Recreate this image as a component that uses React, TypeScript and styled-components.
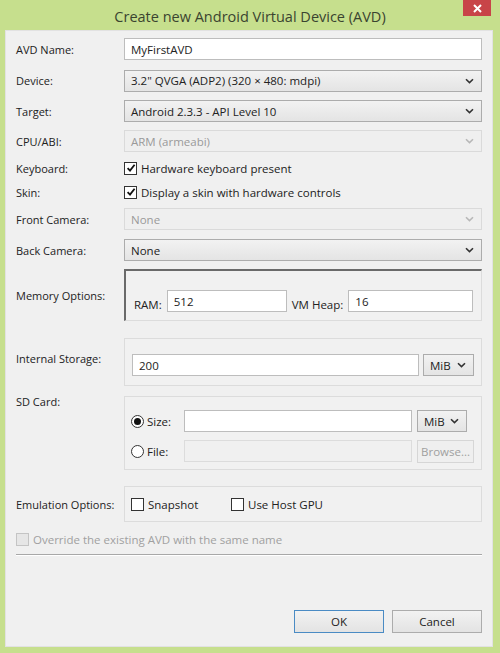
import React from 'react';
import styled, { createGlobalStyle } from 'styled-components';

const GlobalStyle = createGlobalStyle`
  html, body {
    margin: 0;
    padding: 0;
    background: #c6df8d;
  }
  body {
    font-family: "Open Sans", "Noto Sans", sans-serif;
    font-size: 11px;
    color: #222;
  }
`;

const Window = styled.div`
  width: 500px;
  height: 653px;
  background: #c6df8d;
  display: flex;
  flex-direction: column;
  box-sizing: border-box;
`;

const TitleBar = styled.div`
  height: 30px;
  display: grid;
  grid-template-columns: 1fr auto 1fr;
`;

const Title = styled.div`
  grid-column: 2;
  align-self: center;
  font-size: 14.5px;
  color: #3a4430;
  padding-top: 2px;
`;

const CloseButton = styled.div`
  grid-column: 3;
  justify-self: end;
  align-self: start;
  width: 28px;
  height: 16px;
  margin-right: 9px;
  background: #c84448;
  display: flex;
  align-items: center;
  justify-content: center;
`;

const Panel = styled.div`
  flex: 1;
  margin: 0 7px 6px 5px;
  background: #f0f0f0;
  border: 1px solid #e2e2e2;
  padding: 7px 10px 13px 10px;
  display: flex;
  flex-direction: column;
`;

const Row = styled.div<{ $h: number; $mt?: number; $top?: boolean }>`
  display: flex;
  align-items: ${(p) => (p.$top ? 'flex-start' : 'center')};
  height: ${(p) => p.$h}px;
  margin-top: ${(p) => p.$mt ?? 0}px;
`;

const Label = styled.div<{ $dy?: number }>`
  width: 108px;
  flex: none;
  position: relative;
  top: ${(p) => p.$dy ?? 0}px;
`;

const TextInput = styled.input<{ $w?: number }>`
  box-sizing: border-box;
  height: 22px;
  ${(p) => (p.$w ? `width: ${p.$w}px; flex: none;` : 'flex: 1; width: 0; min-width: 0;')}
  border: 1px solid #bdbdbd;
  background: #fff;
  font-family: inherit;
  font-size: 11.5px;
  color: #222;
  padding: 0 6px;
  outline: none;
  &:disabled {
    background: #f0f0f0;
    border-color: #dcdcdc;
  }
`;

const SelectBox = styled.div<{ $disabled?: boolean; $w?: number }>`
  box-sizing: border-box;
  height: 22px;
  ${(p) => (p.$w ? `width: ${p.$w}px; flex: none;` : 'flex: 1;')}
  display: flex;
  align-items: center;
  justify-content: space-between;
  padding: 0 7px 0 6px;
  border: 1px solid ${(p) => (p.$disabled ? '#dadada' : '#acacac')};
  background: ${(p) =>
    p.$disabled ? '#efefef' : 'linear-gradient(#f2f2f2, #e4e4e4)'};
  color: ${(p) => (p.$disabled ? '#9a9a9a' : '#222')};
  font-size: 11.5px;
`;

const Check = styled.span<{ $disabled?: boolean }>`
  box-sizing: border-box;
  width: 13px;
  height: 13px;
  flex: none;
  border: 1px solid ${(p) => (p.$disabled ? '#c4c4c4' : '#333')};
  background: ${(p) => (p.$disabled ? '#e6e6e6' : '#fff')};
  display: inline-flex;
  align-items: center;
  justify-content: center;
  margin-right: 4px;
`;

const Radio = styled.span`
  box-sizing: border-box;
  width: 13px;
  height: 13px;
  flex: none;
  border: 1px solid #333;
  border-radius: 50%;
  background: #fff;
  display: inline-flex;
  align-items: center;
  justify-content: center;
  margin-right: 3px;
`;

const Dot = styled.span`
  width: 7px;
  height: 7px;
  border-radius: 50%;
  background: #111;
`;

const Option = styled.label<{ $w?: number; $disabled?: boolean }>`
  display: inline-flex;
  align-items: center;
  ${(p) => (p.$w ? `width: ${p.$w}px;` : '')}
  flex: none;
  color: ${(p) => (p.$disabled ? '#a0a0a0' : '#222')};
  font-size: 11.5px;
`;

const Group = styled.div<{ $memory?: boolean }>`
  flex: 1;
  min-width: 0;
  height: 100%;
  box-sizing: border-box;
  border: 1px solid #dcdcdc;
  ${(p) => (p.$memory ? 'border-top: 2px solid #6a6a6a; border-left: 2px solid #6a6a6a;' : '')}
  background: #f1f1f1;
  display: flex;
`;

const MemoryInner = styled.div`
  flex: 1;
  min-width: 0;
  display: flex;
  align-items: flex-end;
  padding: 0 8px 8px 8px;
  gap: 5px;
`;

const InlineLabel = styled.span`
  flex: none;
  font-size: 11.5px;
`;

const StorageInner = styled.div`
  flex: 1;
  min-width: 0;
  display: flex;
  align-items: center;
  gap: 4px;
  padding: 6px 7px 0 7px;
`;

const SdGrid = styled.div`
  display: grid;
  grid-template-columns: 48px 228px auto;
  grid-auto-rows: 22px;
  row-gap: 8px;
  column-gap: 5px;
  padding: 13px 0 0 6px;
  align-items: center;
`;

const EmulationInner = styled.div`
  display: flex;
  align-items: center;
  padding: 0 0 0 6px;
`;

const PushButton = styled.div<{ $w?: number; $primary?: boolean; $disabled?: boolean }>`
  box-sizing: border-box;
  width: ${(p) => p.$w ?? 90}px;
  height: 23px;
  display: flex;
  align-items: center;
  justify-content: center;
  border: 1px solid ${(p) => (p.$primary ? '#4a8bc4' : p.$disabled ? '#d6d6d6' : '#acacac')};
  background: ${(p) => (p.$disabled ? '#efefef' : 'linear-gradient(#f2f2f2, #e3e3e3)')};
  color: ${(p) => (p.$disabled ? '#a0a0a0' : '#222')};
  font-size: 11.5px;
`;

const Separator = styled.div`
  height: 0;
  border-top: 1px solid #a8a8a8;
  border-bottom: 1px solid #ffffff;
  margin-top: 7px;
`;

const ButtonBar = styled.div`
  margin-top: auto;
  display: flex;
  justify-content: flex-end;
  gap: 8px;
`;

function Chevron({ light }: { light?: boolean }) {
  return (
    <svg width="9" height="6" viewBox="0 0 9 6">
      <path d="M1 1.2 L4.5 4.6 L8 1.2" fill="none" stroke={light ? '#b8b8b8' : '#333'} strokeWidth="1.6" />
    </svg>
  );
}

function Tick() {
  return (
    <svg width="10" height="10" viewBox="0 0 10 10">
      <path d="M1.6 5.2 L4 7.6 L8.6 1.8" fill="none" stroke="#111" strokeWidth="1.8" />
    </svg>
  );
}

function Select({ value, disabled, w }: { value: string; disabled?: boolean; w?: number }) {
  return (
    <SelectBox $disabled={disabled} $w={w}>
      <span>{value}</span>
      <Chevron light={disabled} />
    </SelectBox>
  );
}

export default function App() {
  return (
    <>
      <GlobalStyle />
      <Window>
        <TitleBar>
          <Title>Create new Android Virtual Device (AVD)</Title>
          <CloseButton>
            <svg width="9" height="9" viewBox="0 0 9 9">
              <path d="M1 1 L8 8 M8 1 L1 8" stroke="#fff" strokeWidth="2" />
            </svg>
          </CloseButton>
        </TitleBar>
        <Panel>
          <Row $h={22}>
            <Label>AVD Name:</Label>
            <TextInput defaultValue="MyFirstAVD" readOnly />
          </Row>
          <Row $h={23} $mt={9}>
            <Label>Device:</Label>
            <Select value={'3.2" QVGA (ADP2) (320 × 480: mdpi)'} />
          </Row>
          <Row $h={22} $mt={8}>
            <Label>Target:</Label>
            <Select value="Android 2.3.3 - API Level 10" />
          </Row>
          <Row $h={22} $mt={8}>
            <Label>CPU/ABI:</Label>
            <Select value="ARM (armeabi)" disabled />
          </Row>
          <Row $h={18} $mt={7}>
            <Label>Keyboard:</Label>
            <Option>
              <Check><Tick /></Check>
              Hardware keyboard present
            </Option>
          </Row>
          <Row $h={18} $mt={6}>
            <Label>Skin:</Label>
            <Option>
              <Check><Tick /></Check>
              Display a skin with hardware controls
            </Option>
          </Row>
          <Row $h={22} $mt={7}>
            <Label>Front Camera:</Label>
            <Select value="None" disabled />
          </Row>
          <Row $h={22} $mt={9}>
            <Label>Back Camera:</Label>
            <Select value="None" />
          </Row>
          <Row $h={52} $mt={8}>
            <Label>Memory Options:</Label>
            <Group $memory>
              <MemoryInner>
                <InlineLabel>RAM:</InlineLabel>
                <TextInput $w={120} defaultValue="512" readOnly />
                <InlineLabel>VM Heap:</InlineLabel>
                <TextInput defaultValue="16" readOnly />
              </MemoryInner>
            </Group>
          </Row>
          <Row $h={48} $mt={17}>
            <Label $dy={-4}>Internal Storage:</Label>
            <Group>
              <StorageInner>
                <TextInput defaultValue="200" readOnly />
                <Select value="MiB" w={51} />
              </StorageInner>
            </Group>
          </Row>
          <Row $h={74} $mt={10} $top>
            <Label $dy={-2}>SD Card:</Label>
            <Group>
              <SdGrid>
                <Option>
                  <Radio><Dot /></Radio>
                  Size:
                </Option>
                <TextInput $w={228} defaultValue="" readOnly />
                <Select value="MiB" w={50} />
                <Option>
                  <Radio />
                  File:
                </Option>
                <TextInput $w={228} disabled defaultValue="" />
                <PushButton $w={57} $disabled>Browse...</PushButton>
              </SdGrid>
            </Group>
          </Row>
          <Row $h={36} $mt={16}>
            <Label>Emulation Options:</Label>
            <Group>
              <EmulationInner>
                <Option $w={100}>
                  <Check />
                  Snapshot
                </Option>
                <Option>
                  <Check />
                  Use Host GPU
                </Option>
              </EmulationInner>
            </Group>
          </Row>
          <Row $h={16} $mt={9}>
            <Option $disabled>
              <Check $disabled />
              Override the existing AVD with the same name
            </Option>
          </Row>
          <Separator />
          <ButtonBar>
            <PushButton $primary>OK</PushButton>
            <PushButton>Cancel</PushButton>
          </ButtonBar>
        </Panel>
      </Window>
    </>
  );
}
